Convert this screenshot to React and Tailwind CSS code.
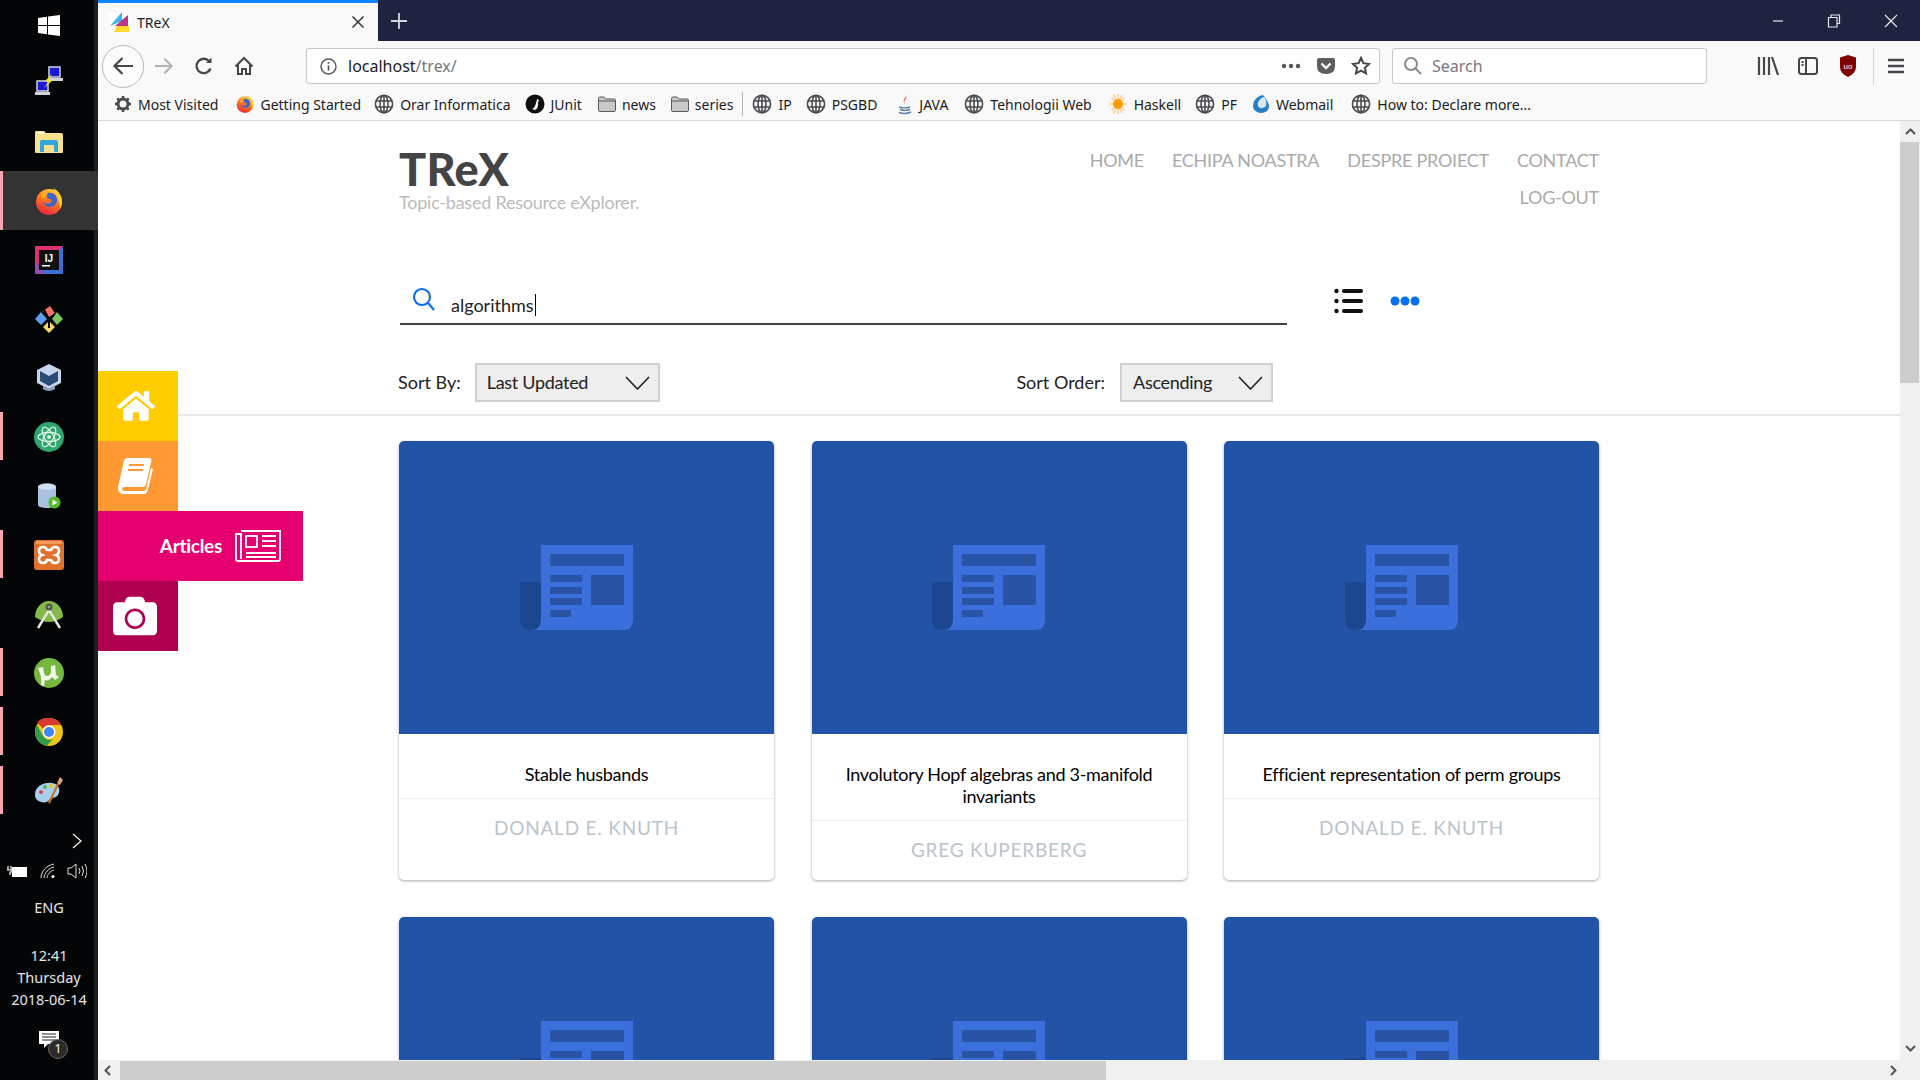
import { useId } from 'react'
import { FaHome, FaCamera } from 'react-icons/fa'

const uiFont = { fontFamily: '"Noto Sans", "Open Sans", sans-serif' }

function Globe() {
  return (
    <svg width="20" height="20" viewBox="0 0 20 20" fill="none" stroke="#4a4a4f" strokeWidth="1.6" className="shrink-0">
      <circle cx="10" cy="10" r="8.6" />
      <ellipse cx="10" cy="10" rx="4" ry="8.6" />
      <path d="M10 1.4v17.2M1.6 7h16.8M1.6 13h16.8" />
    </svg>
  )
}

function Firefox({ size = 18 }) {
  const id = useId()
  return (
    <svg width={size} height={size} viewBox="0 0 28 28" className="shrink-0">
      <defs>
        <linearGradient id={id} x1="0.7" y1="0" x2="0.3" y2="1">
          <stop offset="0" stopColor="#ffd23a" />
          <stop offset="0.45" stopColor="#ff7a1f" />
          <stop offset="1" stopColor="#e8243f" />
        </linearGradient>
      </defs>
      <circle cx="14" cy="15" r="13" fill={`url(#${id})`} />
      <path d="M18 1c6 3 9 8 9 14 0 3-1 5-2 7 0-7-2-14-7-21z" fill="#ffcf2e" />
      <path d="M13 6c5-1 9 2 9 7 0 4-3 7-7 7-3 0-6-2-7-5 2 2 5 2 7 1 2-1 2-3 0-4-2 0-3-1-3-2 0-2 0-3 1-4z" fill="#3a67c9" />
      <path d="M11 5c-3 1-5 4-5 7 1-1 2-2 4-2 0-2 0-3 1-5z" fill="#ffb01f" />
    </svg>
  )
}

function Folder() {
  return (
    <svg width="18" height="16" viewBox="0 0 18 16" className="shrink-0">
      <path d="M.5 2.500q0-1.500 1.500-1.500h4l1.500 2H16q1.500 0 1.500 1.500V14q0 1.500-1.500 1.500H2Q.5 15.500.5 14z" fill="#c9c9c9" stroke="#5a5a5a" />
      <path d="M.5 5h17" stroke="#5a5a5a" />
    </svg>
  )
}

function Bookmark({ icon, label }) {
  return (
    <div className="flex items-center gap-[6px]">
      {icon}
      <span className="whitespace-nowrap">{label}</span>
    </div>
  )
}

function BookmarksBar() {
  return (
    <div className="flex h-[30px] shrink-0 items-center border-b border-[#d8d8d8] bg-[#f9f9fa] pb-[3px] pl-[16px] text-[14px] text-[#1c1b22]">
      <div className="mr-[18px]">
        <Bookmark
          label="Most Visited"
          icon={
            <svg width="18" height="18" viewBox="0 0 18 18" className="shrink-0">
              <circle cx="9" cy="9" r="5" fill="none" stroke="#4a4a4f" strokeWidth="3" />
              <path d="M9 1v3M9 14v3M1 9h3M14 9h3M3.300 3.300l2.100 2.100M12.600 12.600l2.100 2.100M3.300 14.700l2.100-2.100M12.600 5.400l2.100-2.100" stroke="#4a4a4f" strokeWidth="2.600" />
            </svg>
          }
        />
      </div>
      <div className="mr-[13px]"><Bookmark label="Getting Started" icon={<Firefox />} /></div>
      <div className="mr-[14px]"><Bookmark label="Orar Informatica" icon={<Globe />} /></div>
      <div className="mr-[16px]">
        <Bookmark
          label="JUnit"
          icon={
            <svg width="20" height="20" viewBox="0 0 20 20" className="shrink-0">
              <circle cx="10" cy="10" r="9.500" fill="#111" />
              <path d="M7 15c3-1 4-5 5-10 1 0 2 1 2 2-1 0-1 2-1 4s-1 4-3 5z" fill="#fff" />
            </svg>
          }
        />
      </div>
      <div className="mr-[15px]"><Bookmark label="news" icon={<Folder />} /></div>
      <div className="mr-[9px]"><Bookmark label="series" icon={<Folder />} /></div>
      <div className="mr-[9px] h-[24px] w-px bg-[#b1b1b3]" />
      <div className="mr-[14px]"><Bookmark label="IP" icon={<Globe />} /></div>
      <div className="mr-[20px]"><Bookmark label="PSGBD" icon={<Globe />} /></div>
      <div className="mr-[16px]">
        <Bookmark
          label="JAVA"
          icon={
            <svg width="16" height="22" viewBox="0 0 16 22" className="shrink-0">
              <path d="M9 1c2 3-4 5-2 8 .5 1 1 1 1 2-3-3 3-5 1-10z" fill="#e2401b" />
              <path d="M2 14c3 1 8 1 11 0M3 16.500c3 1 7 1 10 0M2 19.500c4 1.500 9 1 12-.5" fill="none" stroke="#5a83a8" strokeWidth="1.400" />
            </svg>
          }
        />
      </div>
      <div className="mr-[16px]"><Bookmark label="Tehnologii Web" icon={<Globe />} /></div>
      <div className="mr-[14px]">
        <Bookmark
          label="Haskell"
          icon={
            <svg width="20" height="22" viewBox="0 0 20 22" className="shrink-0">
              <path d="M10 1v20M1 11h18M3.500 4.500l13 13M16.500 4.500l-13 13M6 2l8 18M14 2L6 20" stroke="#ffc98a" strokeWidth="1.400" />
              <circle cx="10" cy="11" r="5" fill="#ff9d0a" />
            </svg>
          }
        />
      </div>
      <div className="mr-[15px]"><Bookmark label="PF" icon={<Globe />} /></div>
      <div className="mr-[18px]">
        <Bookmark
          label="Webmail"
          icon={
            <svg width="18" height="20" viewBox="0 0 18 20" className="shrink-0">
              <path d="M11 1C5 2 1 7 1 12c0 4 4 7 8 7 5 0 8-3 8-7 0-3-2-5-3-7z" fill="#2a7fc4" />
              <path d="M12 3c-4 1-7 5-6 9 1 2 4 3 7 1 2-2 2-6-1-10z" fill="#d8e8f4" />
            </svg>
          }
        />
      </div>
      <Bookmark label="How to: Declare more..." icon={<Globe />} />
    </div>
  )
}

function TabBar() {
  return (
    <div className="flex h-[41px] shrink-0 items-stretch bg-[#20233f]">
      <div className="flex w-[280px] items-center border-t-[3px] border-[#0a84ff] bg-[#f9f9fa] pl-[11px] pr-[13px] text-[14px] text-[#1c1b22]">
        <svg width="20" height="20" viewBox="0 0 20 20" className="shrink-0">
          <rect width="20" height="20" fill="#fff" />
          <path d="M1 14L13 0v9z" fill="#35b8ec" />
          <path d="M6 14L19 3v11z" fill="#c0328e" />
          <path d="M5 20l3-6h12v6z" fill="#ffd92e" />
        </svg>
        <span className="ml-[8px]">TReX</span>
        <svg width="14" height="14" viewBox="0 0 14 14" className="ml-auto" stroke="#3a3a40" strokeWidth="1.600">
          <path d="M1.500 1.500l11 11M12.500 1.500l-11 11" />
        </svg>
      </div>
      <div className="flex w-[42px] items-center justify-center">
        <svg width="18" height="18" viewBox="0 0 18 18" stroke="#d5d6dd" strokeWidth="1.800">
          <path d="M9 1v16M1 9h16" />
        </svg>
      </div>
      <div className="ml-auto flex items-center gap-[43px] pr-[22px] text-white">
        <svg width="12" height="12" viewBox="0 0 12 12" stroke="#e8e8ee" strokeWidth="1.200"><path d="M1 6h10" /></svg>
        <svg width="14" height="14" viewBox="0 0 14 14" fill="none" stroke="#e8e8ee" strokeWidth="1.200">
          <path d="M4 3.500V1h8.500v8.500H10M1.500 3.500H10V13H1.500z" />
        </svg>
        <svg width="14" height="14" viewBox="0 0 14 14" stroke="#e8e8ee" strokeWidth="1.200"><path d="M1 1l12 12M13 1L1 13" /></svg>
      </div>
    </div>
  )
}

function NavBar() {
  return (
    <div className="flex h-[50px] shrink-0 items-center bg-[#f9f9fa] pl-[4px] text-[#4a4a4f]">
      <div className="flex h-[43px] w-[42px] shrink-0 items-center justify-center rounded-full border border-[#b8b8ba] bg-[#fcfcfc]">
        <svg width="22" height="20" viewBox="0 0 22 20" fill="none" stroke="#45454a" strokeWidth="2.200">
          <path d="M21 10H3M10.500 2L2.500 10l8 8" />
        </svg>
      </div>
      <svg width="20" height="18" viewBox="0 0 22 20" fill="none" stroke="#b4b4b6" strokeWidth="2.200" className="ml-[10px] shrink-0">
        <path d="M1 10h18M11.500 2l8 8-8 8" />
      </svg>
      <svg width="20" height="20" viewBox="0 0 20 20" fill="none" stroke="#45454a" strokeWidth="2.300" className="ml-[20px] shrink-0">
        <path d="M16.500 12.500A7.200 7.200 0 1 1 15 5" />
        <path d="M17.500 1.500V7h-5.500z" fill="#45454a" stroke="none" />
      </svg>
      <svg width="20" height="20" viewBox="0 0 20 20" fill="none" stroke="#45454a" strokeWidth="2" className="ml-[20px] shrink-0">
        <path d="M1.500 10.500L10 2l8.500 8.500M4 8.500V18h4v-5h4v5h4V8.500" />
      </svg>

      <div className="ml-[52px] flex h-[36px] w-[1074px] shrink-0 items-center rounded-[3px] border border-[#c8c8ca] bg-white pl-[13px] pr-[8px] text-[16px]">
        <svg width="17" height="17" viewBox="0 0 17 17" fill="none" stroke="#55555a" strokeWidth="1.400" className="shrink-0">
          <circle cx="8.500" cy="8.500" r="7.500" />
          <path d="M8.500 7.500v5M8.500 4v1.800" strokeWidth="1.700" />
        </svg>
        <span className="ml-[11px] text-[#1c1b22]">localhost</span>
        <span className="text-[#77777c]">/trex/</span>
        <svg width="20" height="6" viewBox="0 0 20 6" fill="#55555a" className="ml-auto shrink-0">
          <circle cx="3" cy="3" r="2.200" /><circle cx="10" cy="3" r="2.200" /><circle cx="17" cy="3" r="2.200" />
        </svg>
        <svg width="20" height="20" viewBox="0 0 20 20" className="ml-[15px] shrink-0">
          <path d="M1 4q0-2 2-2h14q2 0 2 2v6q0 8-9 8T1 10z" fill="#5c5c61" />
          <path d="M5.500 7.500L10 12l4.500-4.500" fill="none" stroke="#fff" strokeWidth="2.400" />
        </svg>
        <svg width="20" height="20" viewBox="0 0 20 20" fill="none" stroke="#45454a" strokeWidth="2" className="ml-[15px] shrink-0">
          <path d="M10 2l2.400 5.200 5.600.7-4.100 3.900 1.100 5.600L10 14.600 5 17.400l1.100-5.600L2 7.900l5.600-.7z" />
        </svg>
      </div>

      <div className="ml-[12px] flex h-[36px] w-[315px] shrink-0 items-center rounded-[3px] border border-[#c8c8ca] bg-white pl-[10px] text-[16px] text-[#77777c]">
        <svg width="20" height="20" viewBox="0 0 20 20" fill="none" stroke="#8a8a8f" strokeWidth="2" className="shrink-0">
          <circle cx="8" cy="8" r="6" />
          <path d="M12.500 12.500L18 18" />
        </svg>
        <span className="ml-[9px]">Search</span>
      </div>

      <svg width="22" height="20" viewBox="0 0 22 20" stroke="#45454a" strokeWidth="2.200" fill="none" className="ml-[50px] shrink-0">
        <path d="M2 1v18M7 1v18M12 1v18M15 1l6 18" />
      </svg>
      <svg width="20" height="18" viewBox="0 0 20 18" fill="none" stroke="#45454a" strokeWidth="2" className="ml-[19px] shrink-0">
        <rect x="1" y="1" width="18" height="16" rx="2.500" />
        <path d="M8 1v16M3.500 5h2M3.500 8h2" />
      </svg>
      <svg width="18" height="22" viewBox="0 0 18 22" className="ml-[21px] shrink-0">
        <path d="M9 0l8 2.500V12q0 6-8 10-8-4-8-10V2.500z" fill="#800000" />
        <text x="9" y="13.500" fontSize="8" fill="#fff" textAnchor="middle" fontFamily="Liberation Sans, sans-serif">uo</text>
      </svg>
      <div className="ml-[16px] h-[37px] w-px bg-[#d4d4d6]" />
      <svg width="18" height="16" viewBox="0 0 18 16" stroke="#45454a" strokeWidth="2.400" className="ml-[13px] shrink-0">
        <path d="M1 2h16M1 8h16M1 14h16" />
      </svg>
    </div>
  )
}

function TaskRow({ children, mark, active }) {
  return (
    <div className={`relative flex h-[59px] shrink-0 items-center justify-center ${active ? 'bg-[#333333]' : ''}`}>
      {mark && <div className="absolute left-0 top-[5px] h-[48px] w-[3px] bg-[#f5a6ae]" />}
      {active && <div className="absolute left-0 top-0 h-full w-[3px] bg-[#f5a6ae]" />}
      {children}
    </div>
  )
}

function Taskbar() {
  return (
    <div className="flex h-full w-[98px] shrink-0 flex-col bg-[#040507] text-[14.5px] text-[#e6e6e6] shadow-[inset_-4px_0_0_#1c1d1f]">
      <div className="flex h-[50px] shrink-0 items-center justify-center">
        <svg width="22" height="21" viewBox="0 0 22 21" fill="#fff">
          <path d="M0 3l9-1.200V10H0zM10 1.600L22 0v10H10zM0 11h9v8.200L0 18zM10 11h12v10l-12-1.600z" />
        </svg>
      </div>
      <div className="flex h-[62px] shrink-0 items-center justify-center">
        <svg width="28" height="30" viewBox="0 0 28 30">
          <rect x="14" y="1" width="11" height="10" fill="#1a1ad0" stroke="#cfd4da" strokeWidth="1.500" />
          <rect x="13" y="12" width="15" height="3" fill="#cfd4da" />
          <rect x="2" y="15" width="11" height="10" fill="#1a1ad0" stroke="#cfd4da" strokeWidth="1.500" />
          <rect x="0" y="26" width="15" height="3" fill="#cfd4da" />
          <path d="M17 8l-7 7 4 0-5 7 9-8-4 0z" fill="#f6e72b" />
        </svg>
      </div>
      <TaskRow>
        <svg width="28" height="24" viewBox="0 0 28 24">
          <path d="M0 2q0-1 1-1h8l2 2h15q2 0 2 2v17q0 1-1 1H1q-1 0-1-1z" fill="#fbe08c" />
          <path d="M5 12q0-2 2-2h14q2 0 2 2v10h-4v-7H9v7H5z" fill="#2fa6e0" />
          <rect x="3" y="2" width="6" height="2" fill="#fff" />
        </svg>
      </TaskRow>
      <TaskRow active><Firefox size={28} /></TaskRow>
      <TaskRow>
        <svg width="28" height="28" viewBox="0 0 28 28">
          <rect width="28" height="28" fill="#3b6fd8" />
          <path d="M0 0h28L0 28z" fill="#e0316e" />
          <path d="M0 28L10 28 0 14z" fill="#8c4fb0" />
          <rect x="4" y="4" width="20" height="20" fill="#111" />
          <text x="14" y="16" fontSize="10" fontWeight="700" fill="#fff" textAnchor="middle" fontFamily="Liberation Sans, sans-serif">IJ</text>
          <rect x="7" y="19" width="8" height="1.500" fill="#fff" />
        </svg>
      </TaskRow>
      <TaskRow>
        <svg width="30" height="30" viewBox="0 0 30 30">
          <path d="M15 2l6 6-6 6-6-6z" transform="rotate(10 15 8)" fill="#f0716a" />
          <path d="M23 8l6 7-6 6-5-6z" fill="#7cc560" />
          <path d="M15 17l6 6-6 6-6-6z" fill="#f5d76e" />
          <path d="M7 8l6 7-6 6-6-6z" fill="#5e9df2" />
          <path d="M10 6l5 9v9M15 15l5-4" stroke="#000" strokeWidth="2" fill="none" />
          <circle cx="15" cy="15" r="2" fill="#000" />
        </svg>
      </TaskRow>
      <TaskRow>
        <svg width="26" height="30" viewBox="0 0 26 30">
          <path d="M13 1l12 6v13l-12 6-12-6V7z" fill="#c7d6ea" />
          <path d="M13 13l9-5v10l-9 5zM13 13L4 8v10l9 5z" fill="#2a4a78" />
          <path d="M7 26q6 4 12 0v-3l-6 3-6-3z" fill="#8aa3c4" />
        </svg>
      </TaskRow>
      <TaskRow mark>
        <svg width="30" height="30" viewBox="0 0 30 30" fill="none">
          <circle cx="15" cy="15" r="15" fill="#2fa56f" />
          <g stroke="#d8f5e6" strokeWidth="1.300">
            <ellipse cx="15" cy="15" rx="11" ry="4.500" />
            <ellipse cx="15" cy="15" rx="11" ry="4.500" transform="rotate(60 15 15)" />
            <ellipse cx="15" cy="15" rx="11" ry="4.500" transform="rotate(120 15 15)" />
          </g>
          <circle cx="15" cy="15" r="2" fill="#d8f5e6" />
        </svg>
      </TaskRow>
      <TaskRow>
        <svg width="24" height="26" viewBox="0 0 24 26">
          <path d="M1 4c0-5 18-5 18 0v18c0 4-18 4-18 0z" fill="#a9c0e0" />
          <ellipse cx="10" cy="4" rx="9" ry="3" fill="#d2e0f2" />
          <circle cx="17.500" cy="19.500" r="6" fill="#58b82a" />
          <path d="M15.500 16.500l5 3-5 3z" fill="#fff" />
        </svg>
      </TaskRow>
      <TaskRow mark>
        <svg width="30" height="30" viewBox="0 0 30 30">
          <rect width="30" height="30" rx="3" fill="#e0702a" />
          <rect x="2" y="1" width="26" height="3" fill="#f09a5c" />
          <path d="M9 7q3 0 4 3h4q1-3 4-3 4 0 4 4 0 3-3 4 3 1 3 4 0 4-4 4-3 0-4-3h-4q-1 3-4 3-4 0-4-4 0-3 3-4-3-1-3-4 0-4 4-4z" fill="none" stroke="#fff" strokeWidth="2.600" />
        </svg>
      </TaskRow>
      <TaskRow>
        <svg width="30" height="30" viewBox="0 0 30 30">
          <path d="M1 18a14 16 0 0 1 28 0q-14 10-28 0z" fill="#84b848" />
          <path d="M4 29L15 11l11 18" fill="none" stroke="#e6e6e6" strokeWidth="2.400" />
          <circle cx="15" cy="8" r="3.500" fill="#55555a" />
          <circle cx="15" cy="8" r="1.300" fill="#84b848" />
        </svg>
      </TaskRow>
      <TaskRow mark>
        <svg width="30" height="30" viewBox="0 0 30 30">
          <circle cx="15" cy="15" r="15" fill="#76b83f" />
          <path d="M4 10l5-1c1 5 1 9 4 9 2 0 4-2 4-4V8l4-1c1 5 0 8 2 11l2 1-4 3-3-3c-2 3-5 4-7 3l-1 6-3-1c1-7-1-12-3-17z" fill="#f2f7ea" />
        </svg>
      </TaskRow>
      <TaskRow mark>
        <svg width="28" height="28" viewBox="0 0 28 28">
          <circle cx="14" cy="14" r="14" fill="#f0c419" />
          <path d="M14 0a14 14 0 0 1 12.100 7H14a7 7 0 0 0-6 3.500L2 4.500A14 14 0 0 1 14 0z" fill="#d93b2f" />
          <path d="M1.900 7a14 14 0 0 0 10 20.800L18 21a7 7 0 0 1-10-3.500z" fill="#2f9e4a" />
          <circle cx="14" cy="14" r="6.500" fill="#fff" />
          <circle cx="14" cy="14" r="5" fill="#4285f4" />
        </svg>
      </TaskRow>
      <TaskRow mark>
        <svg width="30" height="30" viewBox="0 0 30 30">
          <path d="M1 19C1 10 10 6 18 7c7 1 9 7 6 12-3 4-6 2-8 4-2 3-5 4-9 3-3-1-6-3-6-7z" fill="#a8d0ee" />
          <circle cx="7" cy="16" r="2" fill="#e0453a" />
          <circle cx="11" cy="11" r="2" fill="#58b84a" />
          <circle cx="17" cy="10" r="2" fill="#f0c419" />
          <path d="M15 27L24 8" stroke="#c8742a" strokeWidth="2.200" />
          <path d="M23 7l3-6 3 3-3 5z" fill="#d8a870" />
        </svg>
      </TaskRow>
      <div className="flex h-[41px] shrink-0 items-center justify-end pr-[16px]">
        <svg width="10" height="16" viewBox="0 0 10 16" fill="none" stroke="#f0f0f0" strokeWidth="1.300"><path d="M1 1l8 7-8 7" /></svg>
      </div>
      <div className="flex h-[20px] shrink-0 items-center justify-between pl-[7px] pr-[11px]">
        <svg width="21" height="14" viewBox="0 0 21 14">
          <path d="M1 2v4M4 2v4M0 6h5v2H3v3" fill="none" stroke="#fff" strokeWidth="1.200" />
          <rect x="5" y="3" width="15" height="10" fill="#fff" />
        </svg>
        <svg width="16" height="16" viewBox="0 0 16 16" fill="none" stroke="#e0e0e0" strokeWidth="1">
          <path d="M1 15C1 8 7 2 14 1M4 15c0-5 5-10 10-11M7 15c0-3 3-7 7-8" />
          <circle cx="13" cy="13.500" r="1.500" fill="#fff" stroke="none" />
        </svg>
        <svg width="20" height="16" viewBox="0 0 20 16" fill="none" stroke="#e0e0e0" strokeWidth="1">
          <path d="M1 5h3l5-4v14l-5-4H1zM12 5q2 3 0 6M15 3q3 5 0 10M18 1q4 7 0 14" />
        </svg>
      </div>
      <div className="mt-[17px] text-center leading-[18px]">ENG</div>
      <div className="mt-[28px] text-center leading-[22px]">
        <div>12:41</div>
        <div>Thursday</div>
        <div>2018-06-14</div>
      </div>
      <div className="relative mx-auto mt-[21px] h-[22px] w-[20px] shrink-0">
        <svg width="20" height="18" viewBox="0 0 20 18" fill="#fff">
          <path d="M0 0h20v13H9l-4 4v-4H0z" />
          <path d="M3 3h14M3 6h14M3 9h14" stroke="#222" strokeWidth="1" />
        </svg>
        <div className="absolute left-[9px] top-[8px] flex h-[20px] w-[20px] items-center justify-center rounded-full border border-[#666] bg-[#2a2a2a] text-[12px] text-white">1</div>
      </div>
    </div>
  )
}

function SideMenu() {
  return (
    <div className="absolute left-0 top-[250px] z-10 flex flex-col text-white" style={{ fontFamily: 'Lato, sans-serif' }}>
      <div className="flex h-[70px] w-[80px] items-center justify-center bg-[#ffcc00] pr-[4px]">
        <FaHome size={38} />
      </div>
      <div className="flex h-[70px] w-[80px] items-center justify-center bg-[#ff9933] pr-[3px]">
        <svg width="38" height="36" viewBox="0 0 38 36" fill="#fff">
          <path d="M9 0h22q3 0 2.400 3L28 26q-.7 3-3.700 3H6q-2 0-2 2t2 2h20q1.500 0 2-2l5-21 2 1-5.500 22q-.8 3-3.500 3H6q-6 0-6-6 0-1 .5-3L6 2.500Q6.500 0 9 0z" />
          <path d="M11 7h15M10 12h15" stroke="#ff9933" strokeWidth="2.200" />
        </svg>
      </div>
      <div className="flex h-[70px] w-[205px] items-center justify-end gap-[13px] bg-[#e6006f] pr-[22px]">
        <span className="text-[19px] font-bold tracking-[-0.3px]">Articles</span>
        <svg width="46" height="32" viewBox="0 0 46 32" fill="none" stroke="#fff" strokeWidth="1.800">
          <path d="M6 1h39v28q0 2-2 2H3q-2 0-2-2V4h5v25" />
          <rect x="11" y="6" width="11" height="11" />
          <path d="M27 6h14M27 11h14M27 16h14M11 23h30M11 27h30" />
        </svg>
      </div>
      <div className="flex h-[70px] w-[80px] items-center justify-center bg-[#b00050] pr-[7px]">
        <FaCamera size={44} />
      </div>
    </div>
  )
}

function Chevron() {
  return (
    <svg width="25" height="14" viewBox="0 0 25 14" fill="none" stroke="#222" strokeWidth="1.600" className="shrink-0">
      <path d="M1 1l11.500 12L24 1" />
    </svg>
  )
}

function Header() {
  return (
    <div className="flex h-[113px] justify-between pl-[301px] pr-[301px]">
      <div className="pt-[25px]">
        <div className="text-[45px] font-black leading-[46px] tracking-[0.3px] text-[#444444]">TReX</div>
        <div className="text-[18px] leading-[20px] tracking-[-0.23px] text-[#bbbbbb]">Topic-based Resource eXplorer.</div>
      </div>
      <div className="pt-[21px] text-[18px] uppercase leading-[37px] tracking-[-0.25px] text-[#aaaaaa]">
        <div className="flex justify-end gap-[28px]">
          <span>Home</span>
          <span>Echipa Noastra</span>
          <span>Despre Proiect</span>
          <span>Contact</span>
        </div>
        <div className="text-right">Log-out</div>
      </div>
    </div>
  )
}

function SearchRow() {
  return (
    <div className="mt-[43px] flex items-start pl-[302px]">
      <div className="flex h-[48px] w-[887px] items-center border-b-2 border-[#3d4247] pl-[12px]">
        <svg width="24" height="24" viewBox="0 0 24 24" fill="none" stroke="#0a6ef0" strokeWidth="2.200" className="mb-[3px] shrink-0">
          <circle cx="10" cy="10" r="8" />
          <path d="M16 16l6 7" />
        </svg>
        <span className="ml-[15px] mt-[9px] border-r border-black pr-px text-[18px] leading-[22px] text-[#222222]">algorithms</span>
      </div>
      <svg width="30" height="26" viewBox="0 0 30 26" className="ml-[47px] mt-[11px] shrink-0" fill="#111">
        <circle cx="2.500" cy="3" r="2.200" /><rect x="8" y="1" width="21" height="4" rx="2" />
        <circle cx="2.500" cy="13" r="2.200" /><rect x="8" y="11" width="21" height="4" rx="2" />
        <circle cx="2.500" cy="23" r="2.200" /><rect x="8" y="21" width="21" height="4" rx="2" />
      </svg>
      <svg width="30" height="10" viewBox="0 0 30 10" className="ml-[26px] mt-[19px] shrink-0" fill="#0a6ef0">
        <circle cx="5" cy="5" r="4.500" /><circle cx="15" cy="5" r="4.500" /><circle cx="25" cy="5" r="4.500" />
      </svg>
    </div>
  )
}

function SortRow() {
  return (
    <div className="mt-[38px] flex w-[1175px] items-center pl-[300px] text-[18px] text-[#222222]">
      <span>Sort By:</span>
      <div className="ml-[14px] flex h-[39px] w-[185px] items-center justify-between border-2 border-[#d0d0d0] bg-[#eeeeee] pl-[10px] pr-[8px] tracking-[-0.3px]">
        <span>Last Updated</span>
        <Chevron />
      </div>
      <span className="ml-auto">Sort Order:</span>
      <div className="ml-[15px] flex h-[39px] w-[153px] items-center justify-between border-2 border-[#d0d0d0] bg-[#eeeeee] pl-[11px] pr-[8px] tracking-[-0.3px]">
        <span>Ascending</span>
        <Chevron />
      </div>
    </div>
  )
}

function PaperIcon() {
  return (
    <svg width="113" height="85" viewBox="0 0 113 85" className="shrink-0">
      <path d="M0 37h21v38q0 10-10.500 10T0 75z" fill="#1c4690" />
      <path d="M21 0h92v75q0 10-10 10H11q10 0 10-10z" fill="#3b6fdc" />
      <g fill="#2a52a5">
        <rect x="30" y="9" width="74" height="12" />
        <rect x="30" y="30" width="32" height="7" />
        <rect x="30" y="42" width="32" height="7" />
        <rect x="30" y="53" width="32" height="7" />
        <rect x="30" y="65" width="21" height="7" />
        <rect x="71" y="30" width="33" height="30" />
      </g>
    </svg>
  )
}

function Card({ title, author }) {
  return (
    <div className="flex h-[439px] w-full flex-col overflow-hidden rounded-[5px] bg-white shadow-[0_1px_3px_rgba(0,0,0,0.35)]">
      <div className="flex h-[293px] shrink-0 items-center justify-center bg-[#2253a6] pr-[21px]">
        <PaperIcon />
      </div>
      {title && (
        <>
          <div className="border-b border-[#eeeeee] px-[20px] pb-[13px] pt-[29px] text-center text-[18px] leading-[22px] tracking-[-0.3px] text-black">
            {title}
          </div>
          <div className="pt-[17px] text-center text-[19px] leading-[24px] tracking-[0.8px] text-[#b9c4cc]">{author}</div>
        </>
      )}
    </div>
  )
}

const cards = [
  { title: 'Stable husbands', author: 'DONALD E. KNUTH' },
  { title: 'Involutory Hopf algebras and 3-manifold invariants', author: 'GREG KUPERBERG' },
  { title: 'Efficient representation of perm groups', author: 'DONALD E. KNUTH' },
  {},
  {},
  {},
]

function Page() {
  return (
    <div className="relative flex min-h-0 flex-1 flex-col bg-white">
      <div className="flex min-h-0 flex-1">
        <div className="min-w-0 flex-1 overflow-hidden" style={{ fontFamily: 'Lato, sans-serif' }}>
          <Header />
          <SearchRow />
          <SortRow />
          <div className="mt-[12px] h-[2px] bg-[#e9e9e9]" />
          <div className="mt-[25px] grid grid-cols-[375px_375px_375px] gap-x-[37.5px] gap-y-[37px] pl-[301px]">
            {cards.map((c, i) => <Card key={i} title={c.title} author={c.author} />)}
          </div>
        </div>
        <div className="flex w-[20px] shrink-0 flex-col bg-[#f0f0f0]">
          <div className="flex h-[21px] items-center justify-center">
            <svg width="11" height="7" viewBox="0 0 11 7" fill="none" stroke="#555" strokeWidth="2"><path d="M1 6l4.500-4.500L10 6" /></svg>
          </div>
          <div className="h-[241px] w-[19px] bg-[#cdcdcd]" />
          <div className="mt-auto flex h-[20px] items-center justify-center pb-[4px]">
            <svg width="11" height="7" viewBox="0 0 11 7" fill="none" stroke="#555" strokeWidth="2"><path d="M1 1l4.500 4.500L10 1" /></svg>
          </div>
        </div>
      </div>
      <div className="flex h-[20px] shrink-0 items-center bg-[#f0f0f0]">
        <div className="flex h-full w-[22px] items-center justify-center pr-[4px]">
          <svg width="7" height="11" viewBox="0 0 7 11" fill="none" stroke="#555" strokeWidth="2"><path d="M6 1L1.500 5.500 6 10" /></svg>
        </div>
        <div className="h-[19px] w-[986px] bg-[#cdcdcd]" />
        <div className="ml-auto flex h-full w-[40px] items-center justify-center pr-[13px]">
          <svg width="7" height="11" viewBox="0 0 7 11" fill="none" stroke="#555" strokeWidth="2"><path d="M1 1l4.500 4.500L1 10" /></svg>
        </div>
      </div>
      <SideMenu />
    </div>
  )
}

export default function App() {
  return (
    <div className="flex h-screen w-screen overflow-hidden bg-white" style={uiFont}>
      <Taskbar />
      <div className="flex min-w-0 flex-1 flex-col">
        <TabBar />
        <NavBar />
        <BookmarksBar />
        <Page />
      </div>
    </div>
  )
}
